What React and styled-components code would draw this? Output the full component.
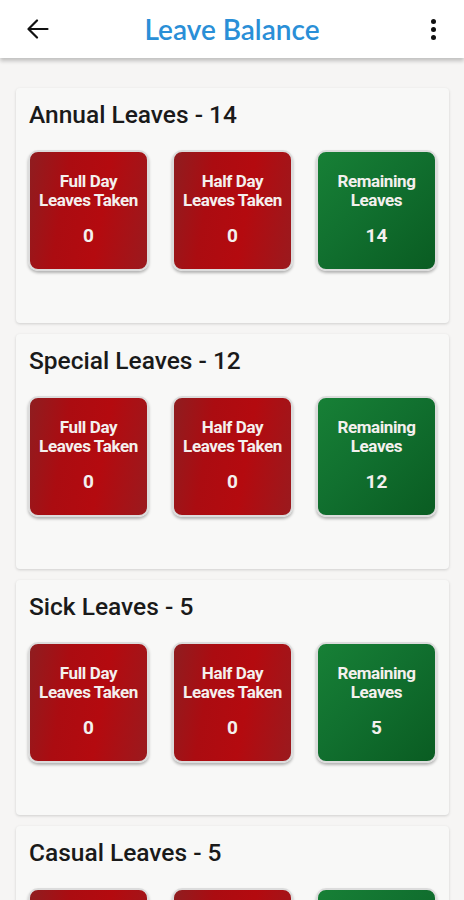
import React from "react";
import styled, { createGlobalStyle } from "styled-components";

const leaveTypes = [
  { name: "Annual Leaves", total: 14, full: 0, half: 0, remaining: 14 },
  { name: "Special Leaves", total: 12, full: 0, half: 0, remaining: 12 },
  { name: "Sick Leaves", total: 5, full: 0, half: 0, remaining: 5 },
  { name: "Casual Leaves", total: 5, full: 0, half: 0, remaining: 5 },
];

export default function App() {
  return (
    <>
      <GlobalStyle />
      <Page>
        <Header>
          <IconButton aria-label="back">
            <svg width="22" height="20" viewBox="0 0 22 20" fill="none">
              <path
                d="M20.5 10H2M10 1.5L1.5 10L10 18.5"
                stroke="#111"
                strokeWidth="2.2"
                strokeLinecap="round"
                strokeLinejoin="round"
              />
            </svg>
          </IconButton>
          <Title>Leave Balance</Title>
          <IconButton aria-label="more">
            <Kebab>
              <Dot />
              <Dot />
              <Dot />
            </Kebab>
          </IconButton>
        </Header>
        <List>
          {leaveTypes.map((leave) => (
            <Card key={leave.name}>
              <CardTitle>
                {leave.name} - {leave.total}
              </CardTitle>
              <TileRow>
                <Tile $variant="red">
                  <TileLabel>
                    Full Day
                    <br />
                    Leaves Taken
                  </TileLabel>
                  <TileValue>{leave.full}</TileValue>
                </Tile>
                <Tile $variant="red">
                  <TileLabel>
                    Half Day
                    <br />
                    Leaves Taken
                  </TileLabel>
                  <TileValue>{leave.half}</TileValue>
                </Tile>
                <Tile $variant="green">
                  <TileLabel>
                    Remaining
                    <br />
                    Leaves
                  </TileLabel>
                  <TileValue>{leave.remaining}</TileValue>
                </Tile>
              </TileRow>
            </Card>
          ))}
        </List>
      </Page>
    </>
  );
}

const GlobalStyle = createGlobalStyle`
  html, body {
    margin: 0;
    padding: 0;
    background: #f6f5f4;
    overflow: hidden;
  }
  * {
    box-sizing: border-box;
  }
`;

const Page = styled.div`
  width: 464px;
  height: 900px;
  overflow: hidden;
  background: #f6f5f4;
  font-family: Roboto, "Liberation Sans", sans-serif;
`;

const Header = styled.div`
  height: 58px;
  background: #fff;
  display: flex;
  align-items: center;
  justify-content: space-between;
  padding: 0 14px 0 22px;
  box-shadow: 0 3px 4px rgba(0, 0, 0, 0.22);
  position: relative;
  z-index: 1;
`;

const IconButton = styled.div`
  width: 32px;
  height: 32px;
  display: flex;
  align-items: center;
  justify-content: center;
`;

const Title = styled.div`
  font-family: Lato, "Open Sans", sans-serif;
  font-size: 28px;
  font-weight: 600;
  color: #2a8fd7;
  margin-left: -8px;
`;

const Kebab = styled.div`
  display: flex;
  flex-direction: column;
  gap: 3px;
  align-items: center;
`;

const Dot = styled.span`
  width: 5px;
  height: 5px;
  border-radius: 50%;
  background: #111;
`;

const List = styled.div`
  display: flex;
  flex-direction: column;
  gap: 11px;
  padding: 30px 15px 0 16px;
`;

const Card = styled.div`
  background: #f8f8f7;
  border-radius: 4px;
  box-shadow: 0 1px 3px rgba(0, 0, 0, 0.16);
  height: 235px;
  flex-shrink: 0;
  padding: 11px 12px 0 12px;
`;

const CardTitle = styled.div`
  font-size: 24.5px;
  font-weight: 500;
  color: #1a1a1a;
  line-height: 32px;
  margin-left: 1px;
  margin-bottom: 19px;
`;

const TileRow = styled.div`
  display: flex;
  gap: 23px;
`;

const Tile = styled.div`
  width: 121px;
  height: 121px;
  border-radius: 10px;
  border: 2px solid #dcdcdc;
  box-shadow: 0 2px 3px rgba(0, 0, 0, 0.28);
  background: ${(p) =>
    p.$variant === "green"
      ? "linear-gradient(135deg, #178036 0%, #11702f 45%, #0a5c22 100%)"
      : "linear-gradient(100deg, #8f1d20 0%, #ab0c11 30%, #b40a0f 60%, #9a1a1e 100%)"};
  display: flex;
  flex-direction: column;
  align-items: center;
  padding-top: 20px;
  color: #fff;
  text-align: center;
`;

const TileLabel = styled.div`
  font-size: 17px;
  font-weight: 700;
  line-height: 19px;
  letter-spacing: -0.4px;
  color: #f4f0ee;
`;

const TileValue = styled.div`
  font-size: 19px;
  font-weight: 700;
  margin-top: 14px;
  color: #f4f0ee;
`;
